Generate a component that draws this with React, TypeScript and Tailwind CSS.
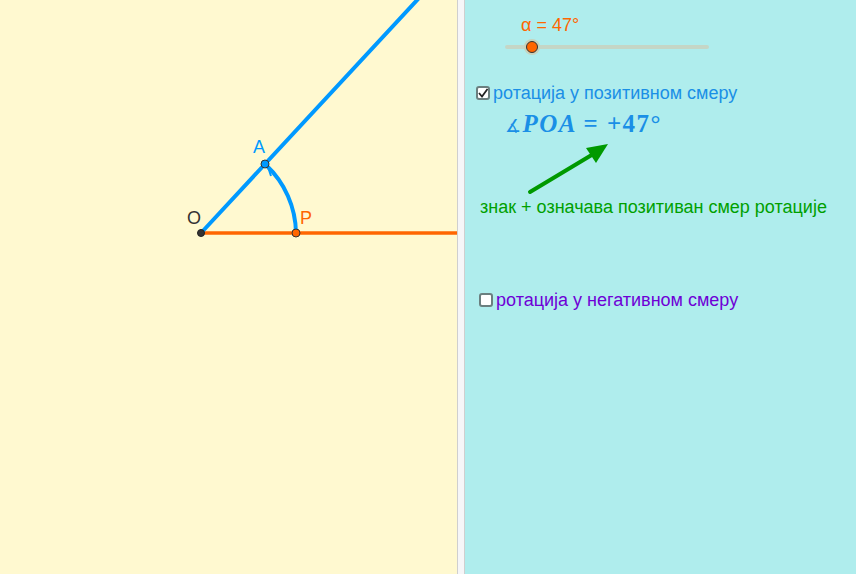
import React from 'react';

const font = { fontFamily: '"Liberation Sans", Arial, sans-serif' };

function Construction() {
  return (
    <svg width="457" height="574" viewBox="0 0 457 574" className="block">
      {/* ray OP */}
      <line x1="201" y1="233" x2="457" y2="233" stroke="#ff6600" strokeWidth="3.5" />
      {/* ray OA */}
      <line x1="201" y1="233" x2="419" y2="-2" stroke="#0099ff" strokeWidth="4" strokeLinecap="round" />
      {/* angle arc P -> A */}
      <path d="M296 233 A95 95 0 0 0 266 165" fill="none" stroke="#0099ff" strokeWidth="4" />
      <path d="M268 167 L274 173 M268 167 L271 176" stroke="#0099ff" strokeWidth="2" />
      {/* points */}
      <circle cx="201" cy="233" r="3.5" fill="#333" stroke="#222" strokeWidth="1" />
      <circle cx="296" cy="233" r="4" fill="#ff6600" stroke="#333" strokeWidth="1" />
      <circle cx="265" cy="164" r="4" fill="#0099ff" stroke="#333" strokeWidth="1" />
      <text x="187" y="224" fontSize="18" fill="#333" style={font}>O</text>
      <text x="253" y="153" fontSize="18" fill="#0099ff" style={font}>A</text>
      <text x="300" y="224" fontSize="18" fill="#ff6600" style={font}>P</text>
    </svg>
  );
}

function Box({ checked }: { checked?: boolean }) {
  return (
    <span className="w-[14px] h-[14px] rounded-[3px] border-2 border-[#6b7f7f] bg-white flex items-center justify-center shrink-0">
      {checked && (
        <svg width="10" height="10" viewBox="0 0 10 10">
          <path d="M1 5 L4 8.5 L9.5 1" fill="none" stroke="#222" strokeWidth="1.8" />
        </svg>
      )}
    </span>
  );
}

export default function App() {
  return (
    <div className="w-[856px] h-[574px] flex overflow-hidden" style={font}>
      <div className="w-[457px] h-full bg-[#fff9d0]">
        <Construction />
      </div>
      <div className="w-[8px] h-full bg-[#f6f6f8] border-x border-[#cfcfcf]" />
      <div className="flex-1 h-full bg-[#afeded] flex flex-col">
        {/* slider */}
        <div className="pl-[56px] pt-[14px] text-[18px] leading-[22px] text-[#ff6600]">α = 47°</div>
        <div className="ml-[40px] mt-[3px] w-[204px] h-[16px] relative flex items-center">
          <div className="w-full h-[4px] rounded-full bg-[#c5d6c6]" />
          <div className="absolute left-[19px] top-0 w-[16px] h-[16px] rounded-full bg-[#c7d3bd] flex items-center justify-center">
            <div className="w-[12px] h-[12px] rounded-full bg-[#ff6600] border-[1.5px] border-[#333]" />
          </div>
        </div>
        {/* checkbox 1 */}
        <div className="ml-[11px] mt-[27px] flex items-center gap-[3px] text-[18px] leading-[22px] text-[#1a8fe6]">
          <Box checked />
          <span>ротација у позитивном смеру</span>
        </div>
        <div
          className="ml-[40px] mt-[6px] text-[25px] leading-[28px] italic font-bold tracking-[1.5px] text-[#1a8fe6]"
          style={{ fontFamily: '"Liberation Serif", "Times New Roman", serif' }}
        >
          <span className="not-italic font-normal text-[18px]">∡</span>POA = <span className="not-italic">+47°</span>
        </div>
        <div className="ml-[60px] h-[56px]">
          <svg width="90" height="56" viewBox="0 0 90 56">
            <line x1="5" y1="52" x2="70" y2="13" stroke="#009900" strokeWidth="4" strokeLinecap="round" />
            <path d="M83 4 L61 8 L71 23 Z" fill="#009900" />
          </svg>
        </div>
        <div className="ml-[15px] text-[18px] leading-[22px] text-[#00a000]">
          знак + означава позитиван смер ротације
        </div>
        {/* checkbox 2 */}
        <div className="ml-[14px] mt-[71px] flex items-center gap-[3px] text-[18px] leading-[22px] text-[#6e00d6]">
          <Box />
          <span>ротација у негативном смеру</span>
        </div>
      </div>
    </div>
  );
}
